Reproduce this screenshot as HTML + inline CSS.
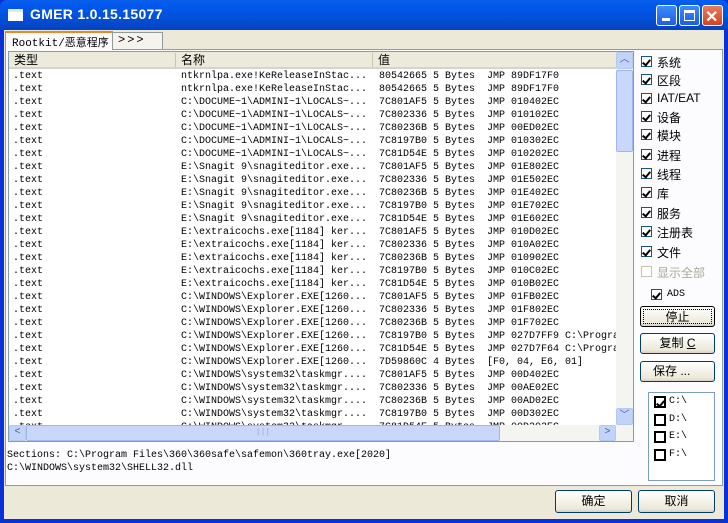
<!DOCTYPE html>
<html><head><meta charset="utf-8"><style>
*{margin:0;padding:0;box-sizing:border-box}
body{width:728px;height:523px;overflow:hidden;background:#0831d9;font-family:"Liberation Mono","Noto Sans CJK SC",monospace;font-size:10px;color:#000;position:relative}
.abs{position:absolute}
#title{left:0;top:0;width:728px;height:30px;background:linear-gradient(#0a5fe8,#0058ee 20%,#0450d8 60%,#0442c0);border-radius:7px 7px 0 0}
#title span{position:absolute;left:30px;top:6px;color:#fff;font:bold 14px "Liberation Sans",sans-serif;letter-spacing:.3px}
#client{left:4px;top:30px;width:720px;height:489px;background:#ece9d8}
.tb{width:21px;height:21px;top:5px;border:1px solid #fff;border-radius:3px;background:linear-gradient(#3d8bf7,#1d5fe0)}
.cb{width:11px;height:11px;border:1px solid #1c5180;background:#fff}
.cb.on::after{content:"";position:absolute;left:2px;top:1px;width:3px;height:6px;border:solid #000;border-width:0 2px 2px 0;transform:rotate(40deg)}
.lbl{font-family:"Liberation Sans","Noto Sans CJK SC",sans-serif;font-size:12px}
.btn{border:1px solid #003c74;border-radius:3px;background:linear-gradient(#fff,#ece9d8 85%,#d6d0c5);text-align:center;font-family:"Liberation Sans","Noto Sans CJK SC",sans-serif;font-size:12px;line-height:19px}
#list div.r{height:13px;line-height:13px;white-space:pre;position:relative}
#list .r span{position:absolute;top:0;overflow:hidden}
</style></head><body>
<div id="title" class="abs"><div class="abs" style="left:8px;top:9px;width:15px;height:12px;background:#fff;border-top:3px solid #dfe8f8"></div><span>GMER 1.0.15.15077</span>
<div class="abs tb" style="left:656px"><div class="abs" style="left:5px;top:12px;width:8px;height:3px;background:#fff"></div></div>
<div class="abs tb" style="left:679px"><div class="abs" style="left:4px;top:4px;width:11px;height:11px;border:1px solid #fff;border-top-width:3px"></div></div>
<div class="abs tb" style="left:702px;background:linear-gradient(#e97b5e,#d2441f)"><div class="abs" style="left:2px;top:1px;color:#fff;font:bold 16px 'Liberation Sans';">✕</div></div>
</div>
<div id="client" class="abs"></div>
<!-- tab page -->
<div class="abs" style="left:5px;top:49px;width:718px;height:437px;background:#fcfcfe;border:1px solid #919b9c"></div>
<!-- tabs -->
<div class="abs" style="left:5px;top:31px;width:108px;height:19px;background:#fcfcfe;border:1px solid #919b9c;border-bottom:none;border-top:2px solid #e68b2c"></div>
<div class="abs" style="left:12px;top:34px;font-family:'Liberation Mono','Noto Sans CJK SC',monospace;font-size:11px">Rootkit/恶意程序</div>
<div class="abs" style="left:112px;top:32px;width:51px;height:17px;background:#f4f3ee;border:1px solid #919b9c;border-bottom:none"></div>
<div class="abs" style="left:118px;top:33px;font-size:12px;letter-spacing:2px">&gt;&gt;&gt;</div>
<!-- list -->
<div class="abs" style="left:8px;top:51px;width:626px;height:391px;border:1px solid #7f9db9;background:#fff;overflow:hidden">
<div class="abs" style="left:0;top:0;width:608px;height:17px;background:#ebeadb;border-bottom:2px solid #d6d3ce;font-family:'Liberation Sans','Noto Sans CJK SC',sans-serif;font-size:12px;line-height:16px">
<span class="abs" style="left:5px">类型</span><span class="abs" style="left:166px;border-left:1px solid #c7c5b2;padding-left:5px;height:14px;top:1px;line-height:14px">名称</span><span class="abs" style="left:363px;border-left:1px solid #c7c5b2;padding-left:5px;height:14px;top:1px;line-height:14px">值</span></div>
<div id="list" class="abs" style="left:4px;top:18px;width:604px;height:356px;overflow:hidden">
</div>
<div class="abs" style="left:607px;top:0;width:17px;height:373px;background:#f4f4f0">
<div class="abs" style="left:0;top:0;width:17px;height:17px;border:1px solid #b6c8f0;border-radius:2px;background:#c1d3fb;text-align:center;color:#4d6185;font-size:10px;line-height:15px">︿</div>
<div class="abs" style="left:0;top:18px;width:17px;height:82px;border:1px solid #9db6ec;border-radius:2px;background:#c8d7fb"></div>
<div class="abs" style="left:0;top:356px;width:17px;height:17px;border:1px solid #b6c8f0;border-radius:2px;background:#c1d3fb;text-align:center;color:#4d6185;font-size:10px;line-height:15px">﹀</div>
</div>
<div class="abs" style="left:0;top:373px;width:624px;height:16px;background:#f4f4f0">
<div class="abs" style="left:0;top:0;width:17px;height:16px;border:1px solid #b6c8f0;border-radius:2px;background:#c1d3fb;color:#4d6185;font-size:10px;line-height:14px;text-align:center">&lt;</div>
<div class="abs" style="left:17px;top:0;width:474px;height:16px;border:1px solid #9db6ec;border-radius:2px;background:#c8d7fb;color:#8fa7dc;text-align:center;font-size:8px;line-height:14px">|||</div>
<div class="abs" style="left:590px;top:0;width:17px;height:16px;border:1px solid #b6c8f0;border-radius:2px;background:#c1d3fb;color:#4d6185;font-size:10px;line-height:14px;text-align:center">&gt;</div>
</div>
</div>
<!-- right pane -->
<div id="rp"></div>
<div class="abs btn" style="left:640px;top:306px;width:75px;height:21px;border:1px solid #000;"><div style="position:absolute;inset:2px;border:1px dotted #000;line-height:14px">停止</div></div>
<div class="abs btn" style="left:640px;top:333px;width:75px;height:21px">复制 <u>C</u></div>
<div class="abs btn" style="left:640px;top:361px;width:75px;height:21px;text-align:left;padding-left:12px">保存 ...</div>
<div class="abs" style="left:648px;top:392px;width:67px;height:89px;border:1px solid #7f9db9;background:#fff"></div>
<div class="abs" style="left:654px;top:393px;line-height:17.5px;font-size:10px">
<div style="position:relative;padding-left:15px"><div class="abs cb on" style="left:0;top:3px;width:12px;height:12px;border:2px solid #000"></div>C:\</div>
<div style="position:relative;padding-left:15px"><div class="abs cb" style="left:0;top:3px;width:12px;height:12px;border:2px solid #000"></div>D:\</div>
<div style="position:relative;padding-left:15px"><div class="abs cb" style="left:0;top:3px;width:12px;height:12px;border:2px solid #000"></div>E:\</div>
<div style="position:relative;padding-left:15px"><div class="abs cb" style="left:0;top:3px;width:12px;height:12px;border:2px solid #000"></div>F:\</div>
</div>
<!-- details -->
<div class="abs" style="left:7px;top:449px;line-height:13px;font-size:10px;white-space:pre">Sections: C:\Program Files\360\360safe\safemon\360tray.exe[2020]
C:\WINDOWS\system32\SHELL32.dll</div>
<div class="abs btn" style="left:555px;top:490px;width:77px;height:23px;line-height:21px">确定</div>
<div class="abs btn" style="left:638px;top:490px;width:77px;height:23px;line-height:21px">取消</div>
<script>
var rows=[
['ntkrnlpa.exe!KeReleaseInStac...','80542665 5 Bytes  JMP 89DF17F0'],
['ntkrnlpa.exe!KeReleaseInStac...','80542665 5 Bytes  JMP 89DF17F0'],
['C:\\DOCUME~1\\ADMINI~1\\LOCALS~...','7C801AF5 5 Bytes  JMP 010402EC'],
['C:\\DOCUME~1\\ADMINI~1\\LOCALS~...','7C802336 5 Bytes  JMP 010102EC'],
['C:\\DOCUME~1\\ADMINI~1\\LOCALS~...','7C80236B 5 Bytes  JMP 00ED02EC'],
['C:\\DOCUME~1\\ADMINI~1\\LOCALS~...','7C8197B0 5 Bytes  JMP 010302EC'],
['C:\\DOCUME~1\\ADMINI~1\\LOCALS~...','7C81D54E 5 Bytes  JMP 010202EC'],
['E:\\Snagit 9\\snagiteditor.exe...','7C801AF5 5 Bytes  JMP 01E802EC'],
['E:\\Snagit 9\\snagiteditor.exe...','7C802336 5 Bytes  JMP 01E502EC'],
['E:\\Snagit 9\\snagiteditor.exe...','7C80236B 5 Bytes  JMP 01E402EC'],
['E:\\Snagit 9\\snagiteditor.exe...','7C8197B0 5 Bytes  JMP 01E702EC'],
['E:\\Snagit 9\\snagiteditor.exe...','7C81D54E 5 Bytes  JMP 01E602EC'],
['E:\\extraicochs.exe[1184] ker...','7C801AF5 5 Bytes  JMP 010D02EC'],
['E:\\extraicochs.exe[1184] ker...','7C802336 5 Bytes  JMP 010A02EC'],
['E:\\extraicochs.exe[1184] ker...','7C80236B 5 Bytes  JMP 010902EC'],
['E:\\extraicochs.exe[1184] ker...','7C8197B0 5 Bytes  JMP 010C02EC'],
['E:\\extraicochs.exe[1184] ker...','7C81D54E 5 Bytes  JMP 010B02EC'],
['C:\\WINDOWS\\Explorer.EXE[1260...','7C801AF5 5 Bytes  JMP 01FB02EC'],
['C:\\WINDOWS\\Explorer.EXE[1260...','7C802336 5 Bytes  JMP 01F802EC'],
['C:\\WINDOWS\\Explorer.EXE[1260...','7C80236B 5 Bytes  JMP 01F702EC'],
['C:\\WINDOWS\\Explorer.EXE[1260...','7C8197B0 5 Bytes  JMP 027D7FF9 C:\\Program'],
['C:\\WINDOWS\\Explorer.EXE[1260...','7C81D54E 5 Bytes  JMP 027D7F64 C:\\Program'],
['C:\\WINDOWS\\Explorer.EXE[1260...','7D59860C 4 Bytes  [F0, 04, E6, 01]'],
['C:\\WINDOWS\\system32\\taskmgr....','7C801AF5 5 Bytes  JMP 00D402EC'],
['C:\\WINDOWS\\system32\\taskmgr....','7C802336 5 Bytes  JMP 00AE02EC'],
['C:\\WINDOWS\\system32\\taskmgr....','7C80236B 5 Bytes  JMP 00AD02EC'],
['C:\\WINDOWS\\system32\\taskmgr....','7C8197B0 5 Bytes  JMP 00D302EC'],
['C:\\WINDOWS\\system32\\taskmgr....','7C81D54E 5 Bytes  JMP 00D202EC']];
var h='';rows.forEach(function(r){h+='<div class="r"><span style="left:0">.text</span><span style="left:168px;width:192px">'+r[0]+'</span><span style="left:366px;width:240px">'+r[1]+'</span></div>';});
document.getElementById('list').innerHTML=h;
var cks=[['系统',62],['区段',80],['IAT/EAT',99],['设备',117],['模块',135],['进程',155],['线程',174],['库',193],['服务',213],['注册表',232],['文件',252]];
var s='';cks.forEach(function(c){s+='<div class="abs cb on" style="left:641px;top:'+(c[1]-6)+'px"></div><div class="abs lbl" style="left:657px;top:'+(c[1]-8)+'px">'+c[0]+'</div>';});
s+='<div class="abs cb" style="left:641px;top:266px;border-color:#c7c5b2"></div><div class="abs lbl" style="left:657px;top:264px;color:#aca899">显示全部</div>';
s+='<div class="abs cb on" style="left:651px;top:289px"></div><div class="abs" style="left:667px;top:289px;font-size:10px">ADS</div>';
document.getElementById('rp').innerHTML=s;
</script>
</body></html>
